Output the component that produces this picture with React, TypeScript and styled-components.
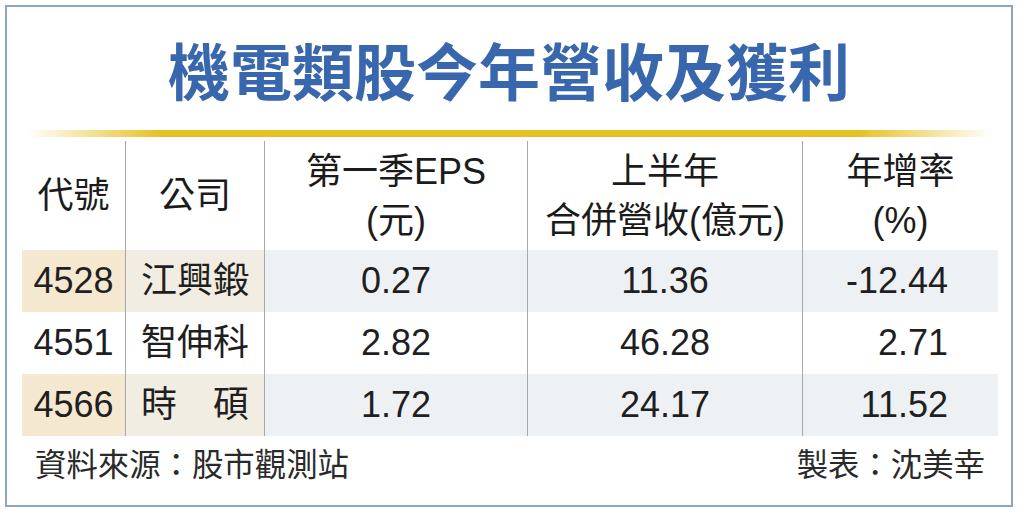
import React from "react";
import styled, { createGlobalStyle } from "styled-components";

const GlobalStyle = createGlobalStyle`
  html, body { margin: 0; padding: 0; background: #ffffff; }
  body { font-family: "Liberation Sans", "Noto Sans CJK TC", sans-serif; }
`;

const Frame = styled.div`
  box-sizing: border-box;
  margin: 5px 0 0 5px;
  width: 1008px;
  height: 502px;
  border: 2px solid #8fa3c6;
  display: flex;
  flex-direction: column;
  background: #ffffff;
`;

const Title = styled.h1`
  margin: 0;
  padding-top: 31px;
  text-align: center;
  font-family: "Noto Sans CJK TC", sans-serif;
  font-weight: 700;
  font-size: 62px;
  line-height: 62px;
  color: #3867ad;
`;

const GoldRule = styled.div`
  height: 7px;
  margin: 30px 19px 0 20px;
  background: linear-gradient(
    to right,
    rgba(230, 190, 30, 0) 0%,
    #e7c024 14%,
    #e7c024 86%,
    rgba(230, 190, 30, 0) 100%
  );
`;

const Table = styled.div`
  margin: 4px 13px 0 15px;
  display: grid;
  grid-template-columns: 103px 139px 263px 275px 196px;
`;

const HeadCell = styled.div<{ $sep: boolean }>`
  box-sizing: border-box;
  height: 109px;
  display: flex;
  flex-direction: column;
  align-items: center;
  justify-content: center;
  border-left: ${(p) => (p.$sep ? "1px solid #a8a8a8" : "none")};
  font-family: "Liberation Sans", "Noto Sans CJK TC", sans-serif;
  font-size: 36px;
  line-height: 49px;
  color: #1b1b1b;
  white-space: nowrap;
`;

const DataCell = styled.div<{
  $sep: boolean;
  $bg: string;
  $align: "center" | "right";
}>`
  box-sizing: border-box;
  height: 62px;
  display: flex;
  align-items: center;
  justify-content: ${(p) => (p.$align === "right" ? "flex-end" : "center")};
  padding-right: ${(p) => (p.$align === "right" ? "50px" : "0")};
  background: ${(p) => p.$bg};
  border-left: ${(p) => (p.$sep ? "1px solid #a8a8a8" : "none")};
  font-family: "Liberation Sans", "Noto Sans CJK TC", sans-serif;
  font-size: 36px;
  line-height: 1;
  color: #1f1f1f;
  white-space: pre;
`;

const Footer = styled.div`
  display: flex;
  justify-content: space-between;
  padding: 8px 26px 0 28px;
  font-family: "Noto Sans CJK TC", sans-serif;
  font-size: 31.4px;
  line-height: 38px;
  color: #2a2a2a;
`;

type Row = { code: string; name: string; eps: string; rev: string; growth: string };

const rows: Row[] = [
  { code: "4528", name: "江興鍛", eps: "0.27", rev: "11.36", growth: "-12.44" },
  { code: "4551", name: "智伸科", eps: "2.82", rev: "46.28", growth: "2.71" },
  { code: "4566", name: "時\u3000碩", eps: "1.72", rev: "24.17", growth: "11.52" },
];

const headers: string[][] = [
  ["代號"],
  ["公司"],
  ["第一季EPS", "(元)"],
  ["上半年", "合併營收(億元)"],
  ["年增率", "(%)"],
];

const shaded = ["#f5e8d0", "#f2ede2", "#eef1f4", "#eef1f4", "#eef1f4"];

export default function App() {
  return (
    <>
      <GlobalStyle />
      <Frame>
        <Title>機電類股今年營收及獲利</Title>
        <GoldRule />
        <Table>
          {headers.map((lines, i) => (
            <HeadCell key={i} $sep={i > 0}>
              {lines.map((l) => (
                <span key={l}>{l}</span>
              ))}
            </HeadCell>
          ))}
          {rows.map((r, ri) => {
            const vals = [r.code, r.name, r.eps, r.rev, r.growth];
            const isShaded = ri % 2 === 0;
            return vals.map((v, ci) => (
              <DataCell
                key={`${ri}-${ci}`}
                $sep={ci > 0}
                $bg={isShaded ? shaded[ci] : "#ffffff"}
                $align={ci === 4 ? "right" : "center"}
              >
                {v}
              </DataCell>
            ));
          })}
        </Table>
        <Footer>
          <span>資料來源：股市觀測站</span>
          <span>製表：沈美幸</span>
        </Footer>
      </Frame>
    </>
  );
}
